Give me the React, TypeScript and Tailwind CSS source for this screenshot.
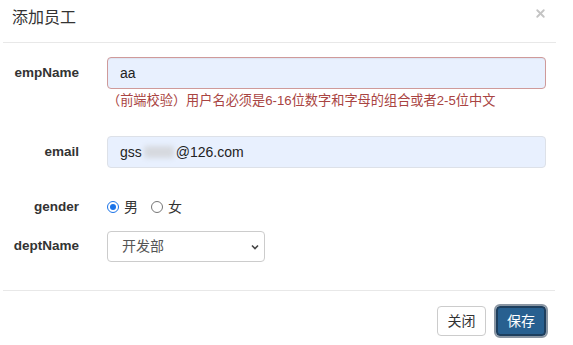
import { X } from 'lucide-react';

const font = { fontFamily: '"Liberation Sans", Arial, "Noto Sans CJK SC", sans-serif' };

function Label({ children }: { children: string }) {
  return (
    <div className="w-[79px] shrink-0 text-right text-[13.5px] font-bold text-[#333]">{children}</div>
  );
}

export default function App() {
  return (
    <div className="w-[573px] h-[345px] bg-white text-[#333] overflow-hidden" style={font}>
      {/* header */}
      <div className="ml-[3px] mr-[17px] h-[43px] border-b border-[#e8e8e8] flex items-center justify-between pl-[9px] pr-[9px]">
        <h4 className="text-[16px] text-[#333] -mt-[6px]">添加员工</h4>
        <X className="w-[13px] h-[13px] text-[#c4c4c4] -mt-[15px]" strokeWidth={3.5} />
      </div>

      {/* body */}
      <div className="pt-[14px]">
        <div className="flex items-center h-[32px]">
          <Label>empName</Label>
          <div className="ml-[28px] w-[439px] h-[32px] rounded-[4px] border border-[#cf9a9a] bg-[#e8f0fe] flex items-center px-[12px] text-[14px] text-[#222] shadow-[inset_0_1px_1px_rgba(0,0,0,0.05)]">
            aa
          </div>
        </div>
        <div className="ml-[107px] mt-[3px] h-[18px] text-[13.2px] leading-[18px] text-[#a94442]">
          （前端校验）用户名必须是6-16位数字和字母的组合或者2-5位中文
        </div>

        <div className="flex items-center h-[32px] mt-[26px]">
          <Label>email</Label>
          <div className="ml-[28px] w-[439px] h-[32px] rounded-[4px] border border-[#dde1e8] bg-[#e8f0fe] flex items-center px-[12px] text-[14px] text-[#222]">
            <span>gss</span>
            <span className="inline-block w-[30px] h-[12px] bg-[#d6d9df] blur-[2.5px] rounded-[3px] mx-[2px]" />
            <span>@126.com</span>
          </div>
        </div>

        <div className="flex items-center h-[20px] mt-[29px]">
          <Label>gender</Label>
          <div className="ml-[28px] flex items-center text-[14px] text-[#333]">
            <span className="w-[12px] h-[12px] rounded-full border border-[#1a73e8] flex items-center justify-center">
              <span className="w-[6px] h-[6px] rounded-full bg-[#1a73e8]" />
            </span>
            <span className="ml-[5px]">男</span>
            <span className="ml-[13px] w-[12px] h-[12px] rounded-full border border-[#767676]" />
            <span className="ml-[5px]">女</span>
          </div>
        </div>

        <div className="flex items-center h-[31px] mt-[14px]">
          <Label>deptName</Label>
          <div className="ml-[28px] w-[158px] h-[31px] rounded-[4px] border border-[#ccc] bg-white flex items-center justify-between pl-[14px] pr-[4px] text-[14px] text-[#555]">
            <span>开发部</span>
            <svg width="10" height="10" viewBox="0 0 10 10" className="text-[#444]">
              <path d="M2 3.5 L5 6.5 L8 3.5" fill="none" stroke="currentColor" strokeWidth="1.6" />
            </svg>
          </div>
        </div>
      </div>

      {/* footer */}
      <div className="mt-[28px] ml-[3px] mr-[18px] border-t border-[#e8e8e8] pt-[15px] flex justify-end gap-[10px] pr-[9px]">
        <button className="w-[49px] h-[30px] rounded-[4px] border border-[#ccc] bg-white text-[14px] text-[#333]">
          关闭
        </button>
        <button className="w-[50px] h-[30px] rounded-[4px] border-2 border-[#1e3f5e] bg-[#286090] text-[14px] text-white outline outline-2 outline-[#8a96a3]">
          保存
        </button>
      </div>
    </div>
  );
}
